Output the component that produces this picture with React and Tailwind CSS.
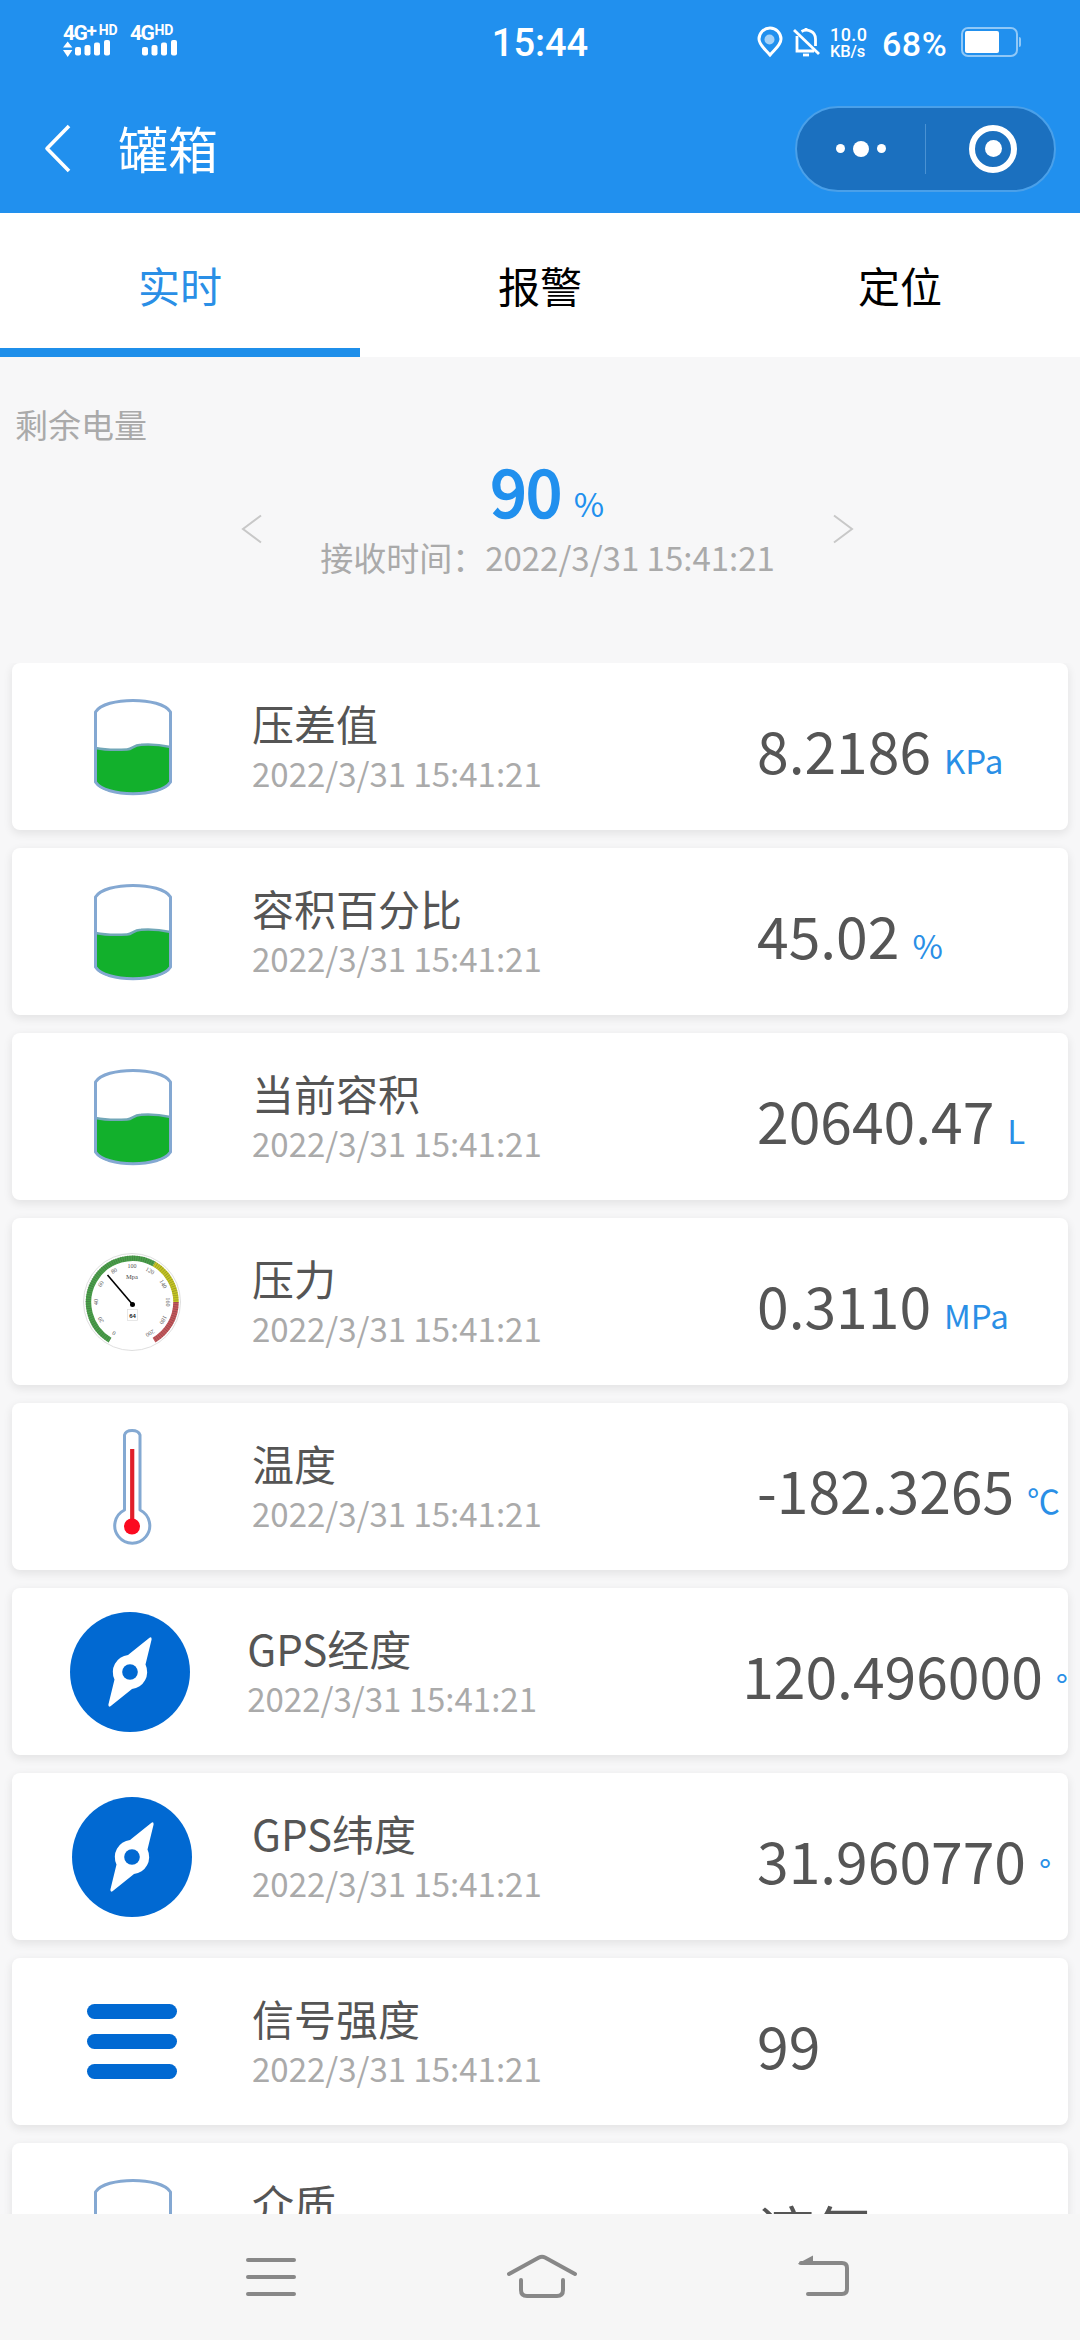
import { useState } from "react";

const TIME = "2022/3/31 15:41:21";

const tabs = ["实时", "报警", "定位"];

const rows = [
  { id: 1, icon: "tank", name: "压差值", value: "8.2186", unit: "KPa" },
  { id: 2, icon: "tank", name: "容积百分比", value: "45.02", unit: "%" },
  { id: 3, icon: "tank", name: "当前容积", value: "20640.47", unit: "L" },
  { id: 4, icon: "gauge", name: "压力", value: "0.3110", unit: "MPa" },
  { id: 5, icon: "thermo", name: "温度", value: "-182.3265", unit: "℃" },
  { id: 6, icon: "compass", name: "GPS经度", value: "120.496000", unit: "°" },
  { id: 7, icon: "compass", name: "GPS纬度", value: "31.960770", unit: "°" },
  { id: 8, icon: "bars", name: "信号强度", value: "99", unit: "" },
  { id: 9, icon: "tank", name: "介质", value: "液氮", unit: "" },
];

function TankIcon() {
  return (
    <svg width="80" height="98" viewBox="0 0 80 98" className="ml-[2px]" fill="none">
      <path d="M2.5 50 C12 52 26 52 34 51.5 C40 51 40 47 48 46.8 C58 46 68 47 77.5 49 V85 C70 100 10 100 2.5 85 Z" fill="#12b02c" />
      <path d="M2.5 50 C12 52 26 52 34 51.5 C40 51 40 47 48 46.8 C58 46 68 47 77.5 49" stroke="#72a7b8" strokeWidth="2.5" />
      <path d="M2.5 14 C12 -1.5 68 -1.5 77.5 14 V84 C68 99.5 12 99.5 2.5 84 Z" stroke="#84a8d2" strokeWidth="3" strokeLinejoin="round" />
    </svg>
  );
}

function GaugeIcon() {
  const labels = [0, 20, 40, 60, 80, 100, 120, 140, 160, 180, 200];
  return (
    <svg width="100" height="100" viewBox="-50 -50 100 100" fill="none">
      <circle r="48.5" stroke="#d5d5d5" strokeWidth="0.8" />
      <path d="M-22 38.1 A44 44 0 0 1 22 -38.1" stroke="#4aa04a" strokeWidth="5.5" />
      <path d="M22 -38.1 A44 44 0 0 1 44 0" stroke="#c3c423" strokeWidth="5.5" />
      <path d="M44 0 A44 44 0 0 1 22 38.1" stroke="#c4565a" strokeWidth="5.5" />
      {/* tick marks over the coloured ring */}
      <path d="M-22 38.1 A44 44 0 1 1 22 38.1" stroke="#333" strokeOpacity="0.35" strokeWidth="5.5" strokeDasharray="0.6 1.7" />
      {labels.map((n, i) => (
        <text
          key={n}
          transform={`rotate(${i * 30 - 150}) translate(0 -34)`}
          textAnchor="middle"
          fontSize="6"
          fill="#555"
          fontFamily="Liberation Serif, serif"
        >
          {n}
        </text>
      ))}
      <text y="-23" textAnchor="middle" fontSize="6.5" fill="#444" fontFamily="Liberation Serif, serif">Mpa</text>
      <path d="M-24.5 -27 L1 3" stroke="#000" strokeWidth="1.6" />
      <circle cx="0.5" cy="2.5" r="2.5" fill="#000" />
      <rect x="-4.5" y="7.5" width="10" height="11" fill="#fff" stroke="#ddd" strokeWidth="0.7" />
      <text x="0.5" y="15.5" textAnchor="middle" fontSize="6" fontWeight="700" fill="#222" fontFamily="Liberation Sans, sans-serif">64</text>
    </svg>
  );
}

function ThermoIcon() {
  return (
    <svg width="40" height="120" viewBox="0 0 40 120" className="mt-[2px]" fill="none">
      <path d="M12.5 82 V7 C14 1 26 1 28 7 V82 A17.5 17.5 0 1 1 12.5 82 Z" stroke="#84a9d2" strokeWidth="3" strokeLinejoin="round" />
      <path d="M20.2 21 V98" stroke="#e0202a" strokeWidth="4.2" />
      <circle cx="20" cy="98.5" r="8" fill="#fb0a20" />
    </svg>
  );
}

function CompassIcon() {
  return (
    <svg width="120" height="120" viewBox="-60 -60 120 120">
      <circle r="60" fill="#0169d2" />
      <path
        d="M19.5 -34.3 Q21.8 -35.5 21.6 -32.5 L15.5 -7.5 A17.2 17.2 0 0 1 2 17 L-19.5 34.3 Q-21.8 35.5 -21.6 32.5 L-15.5 7.5 A17.2 17.2 0 0 1 -2 -17 Z"
        fill="#fff"
      />
      <circle r="7.8" fill="#0169d2" />
    </svg>
  );
}

function BarsIcon() {
  return (
    <div className="flex w-[90px] flex-col gap-[15px]">
      <div className="h-[15px] rounded-full bg-[#0169d2]" />
      <div className="h-[15px] rounded-full bg-[#0169d2]" />
      <div className="h-[15px] rounded-full bg-[#0169d2]" />
    </div>
  );
}

const icons = {
  tank: TankIcon,
  gauge: GaugeIcon,
  thermo: ThermoIcon,
  compass: CompassIcon,
  bars: BarsIcon,
};

function SignalBars({ arrows }) {
  return (
    <svg width="48" height="18" viewBox="0 0 48 18" fill="#fff">
      {arrows && <path d="M0 7.5 L4.7 1.5 L9.4 7.5 Z M0 10 H9.4 L4.7 17 Z" />}
      <rect x="12" y="7" width="6" height="8.5" rx="2" />
      <rect x="21.5" y="5" width="6" height="10.5" rx="2" />
      <rect x="31" y="2.5" width="6" height="13" rx="2" />
      <rect x="41" y="0" width="6" height="15.5" rx="2" />
    </svg>
  );
}

function StatusBar() {
  return (
    <div className="grid h-[84px] grid-cols-3 font-['Roboto',sans-serif] text-white">
      <div className="flex gap-[9px] pt-[24px] pl-[63px]">
        <div className="w-[58px]">
          <div className="flex h-[16px] items-start font-bold whitespace-nowrap">
            <span className="text-[21px] leading-[18px] tracking-[-1.5px]">4G</span>
            <span className="text-[19px] leading-[13px]">+</span>
            <span className="ml-[2px] text-[14px] leading-[13px]">HD</span>
          </div>
          <SignalBars arrows />
        </div>
        <div className="w-[58px]">
          <div className="flex h-[16px] items-start font-bold whitespace-nowrap">
            <span className="text-[21px] leading-[18px] tracking-[-1.5px]">4G</span>
            <span className="ml-[1px] text-[14px] leading-[13px]">HD</span>
          </div>
          <SignalBars />
        </div>
      </div>
      <div className="pt-[20px] text-center text-[38px] leading-[46px] font-medium">15:44</div>
      <div className="flex items-start pt-[26px] pl-[36px]">
        <svg width="28" height="32" viewBox="0 0 28 32" fill="none">
          <path d="M14 29 C9 23 3 19 3 13 A11 11 0 0 1 25 13 C25 19 19 23 14 29 Z" stroke="#fff" strokeWidth="3" />
          <circle cx="13.5" cy="13.5" r="5" fill="#a5d2f8" />
        </svg>
        <svg width="28" height="32" viewBox="0 0 28 32" className="ml-[8px]" fill="none" stroke="#fff" strokeWidth="2.8">
          <path d="M2 4 L27 28" />
          <path d="M5 10 V25 H22" />
          <path d="M9.5 5.5 C15 2.5 23.5 5 23.5 13 V20" />
          <path d="M14 2 V5" />
          <path d="M11 29 H17" />
        </svg>
        <div className="ml-[10px] w-[44px] text-[18px] leading-[17px] font-medium">
          <div className="tracking-[0.4px]">10.0</div>
          <div className="text-[16.5px] tracking-[-0.2px]">KB/s</div>
        </div>
        <div className="ml-[8px] w-[72px] text-[34px] leading-[36px] font-medium tracking-[0.5px]">68%</div>
        <div className="ml-[7px] flex items-center">
          <div className="mt-[1px] h-[30px] w-[57px] rounded-[7px] border-2 border-[#90c8f7] p-[2px]">
            <div className="h-full w-[34px] rounded-[2px] bg-white" />
          </div>
          <div className="ml-px h-[10px] w-[2px] rounded-r bg-[#90c8f7]" />
        </div>
      </div>
    </div>
  );
}

function TitleBar() {
  return (
    <div className="flex h-[129px] items-center pr-[24px] pl-[43px] text-white">
      <svg width="28" height="50" viewBox="0 0 28 50" className="-mt-[2px]" fill="none" stroke="#fff" strokeWidth="3.6" strokeLinejoin="round">
        <path d="M26 3 L4 25.5 L26 48" />
      </svg>
      <h1 className="ml-[47px] pb-[3px] text-[50px] leading-[64px]">罐箱</h1>
      <div className="ml-auto flex h-[86px] w-[261px] items-center rounded-full border-2 border-[#4aa0e9] bg-[#1b70bf]">
        <div className="flex w-[128px] items-center justify-center gap-[8px]">
          <div className="size-[9px] rounded-full bg-white" />
          <div className="size-[16px] rounded-full bg-white" />
          <div className="size-[9px] rounded-full bg-white" />
        </div>
        <div className="h-[50px] w-px bg-[#4a92d3]" />
        <div className="flex flex-1 justify-center pl-[6px]">
          <div className="flex size-[48px] items-center justify-center rounded-full border-[6px] border-white">
            <div className="size-[17px] rounded-full bg-white" />
          </div>
        </div>
      </div>
    </div>
  );
}

function Row({ item }) {
  const Icon = icons[item.icon];
  return (
    <div className="flex h-[167px] shrink-0 items-center rounded-[8px] bg-white shadow-[0_3px_8px_1px_rgba(0,0,0,0.08)]">
      <div className="flex w-[240px] min-w-0 justify-center">
        <Icon />
      </div>
      <div className="w-[505px] min-w-0 pt-[2px] whitespace-nowrap">
        <p className="text-[42px] leading-[52px] text-[#555]">{item.name}</p>
        <p className="text-[33px] leading-[49px] text-[#aaa]">{TIME}</p>
      </div>
      <div className="w-[311px] min-w-fit pt-[23px] leading-[80px] whitespace-nowrap">
        <span className="text-[57px] text-[#555]">{item.value}</span>
        <span className="ml-[13px] text-[33px] text-[#2a8fe6]">{item.unit}</span>
      </div>
    </div>
  );
}

export default function App() {
  const [active, setActive] = useState(0);

  return (
    <div className="flex h-[2340px] w-[1080px] flex-col overflow-hidden bg-[#f7f7f8] font-['Noto_Sans_CJK_SC',sans-serif]">
      <header className="shrink-0 bg-[#2190ee]">
        <StatusBar />
        <TitleBar />
      </header>

      <nav className="grid h-[144px] shrink-0 grid-cols-3 bg-white">
        {tabs.map((tab, i) => (
          <button
            key={tab}
            onClick={() => setActive(i)}
            className={
              i === active
                ? "border-b-[9px] border-[#1f8fea] pt-[7px] text-[42px] text-[#2a8fe6]"
                : "border-b-[9px] border-transparent pt-[7px] text-[42px] text-black"
            }
          >
            {tab}
          </button>
        ))}
      </nav>

      {/* battery left */}
      <section className="h-[306px] shrink-0 pl-[15px]">
        <p className="pt-[43px] text-[33px] leading-[48px] text-[#aaa]">剩余电量</p>
        <div className="flex items-center justify-center">
          <svg width="22" height="30" viewBox="0 0 22 30" className="mt-[28px]" fill="none" stroke="#c8c8c8" strokeWidth="2">
            <path d="M20 1.5 L2 15 L20 28.5" />
          </svg>
          <div className="mx-[57px] text-center">
            <div className="h-[85px] leading-[82px] text-[#2190ee]">
              <span className="text-[64px] [-webkit-text-stroke:2.5px_#2190ee]">90</span>
              <span className="ml-[12px] text-[33px]">%</span>
            </div>
            <p className="text-[33px] leading-[48px] text-[#aaa]">接收时间：{TIME}</p>
          </div>
          <svg width="22" height="30" viewBox="0 0 22 30" className="mt-[28px]" fill="none" stroke="#c8c8c8" strokeWidth="2">
            <path d="M2 1.5 L20 15 L2 28.5" />
          </svg>
        </div>
      </section>

      <main className="flex min-h-0 flex-1 flex-col gap-[18px] overflow-hidden px-[12px]">
        {rows.map((item) => (
          <Row key={item.id} item={item} />
        ))}
      </main>

      {/* system navigation */}
      <footer className="flex h-[126px] shrink-0 items-center justify-between bg-[#f6f6f6] pr-[216px] pl-[236px]">
        <svg width="70" height="60" viewBox="0 0 70 60" stroke="#888" strokeWidth="4" strokeLinecap="round">
          <path d="M12 13 H58 M12 30 H58 M12 47 H58" />
        </svg>
        <svg width="76" height="60" viewBox="0 0 76 60" className="mr-[16px]" fill="none" stroke="#888" strokeWidth="4" strokeLinecap="round" strokeLinejoin="round">
          <path d="M5 27 L35 10.5 Q38 9 41 10.5 L71 27" />
          <path d="M17 33 V43 Q17 49 23 49 H53 Q59 49 59 43 V33" />
        </svg>
        <svg width="70" height="60" viewBox="0 0 70 60" fill="none" stroke="#888" strokeWidth="4" strokeLinecap="round">
          <path d="M26 16 H48 Q53 16 53 21 V42 Q53 47 48 47 H14" />
          <path d="M4 16.5 L19 8.5 V17.5 H5 Z" fill="#888" stroke="none" />
          <path d="M7 16 H28" />
        </svg>
      </footer>
    </div>
  );
}
